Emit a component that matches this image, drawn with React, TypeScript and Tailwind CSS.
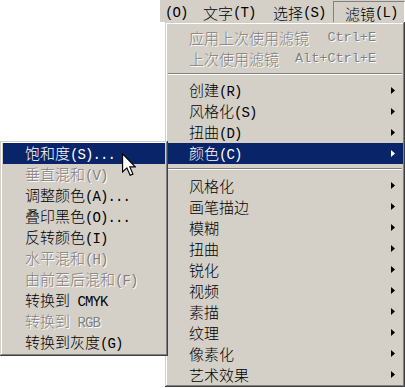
import React from "react";

const bevel =
  "shadow-[inset_-1px_-1px_0_#404040,inset_1px_1px_0_#d4d0c8,inset_-2px_-2px_0_#808080,inset_2px_2px_0_#ffffff]";

function T({ s }: { s: string }) {
  const parts = s.split(/([\x00-\xff]+)/).filter(Boolean);
  return (
    <>
      {parts.map((p, i) =>
        /^[\x00-\xff]+$/.test(p) ? (
          <span
            key={i}
            className="[font-family:'Liberation_Mono',monospace] text-[14px] tracking-[-0.9px] whitespace-pre"
          >
            {p}
          </span>
        ) : (
          <span key={i}>{p}</span>
        )
      )}
    </>
  );
}

function Arrow({ white }: { white?: boolean }) {
  return (
    <svg width="4" height="7" viewBox="0 0 4 7">
      <polygon points="0,0 4,3.5 0,7" fill={white ? "#ffffff" : "#000000"} />
    </svg>
  );
}

type Item = {
  label?: string;
  sep?: boolean;
  disabled?: boolean;
  active?: boolean;
  arrow?: boolean;
  shortcut?: string;
};

function Row({ it, pl }: { it: Item; pl: string }) {
  if (it.sep) {
    return (
      <div className="h-[11px] pt-[4px] px-[1px]">
        <div className="h-[2px] border-t border-b border-t-[#808080] border-b-white" />
      </div>
    );
  }
  const color = it.active
    ? "bg-[#0a246a] text-white"
    : it.disabled
    ? "text-[#808080] [text-shadow:1px_1px_0_#ffffff]"
    : "text-black";
  return (
    <div className={`h-[21px] flex items-center ${pl} pr-[8px] ${color}`}>
      <div className="flex-1 whitespace-nowrap leading-none">
        <T s={it.label || ""} />
      </div>
      {it.shortcut && (
        <span className="mr-[19px] [font-family:'Liberation_Mono',monospace] text-[13.5px] leading-none whitespace-pre">
          {it.shortcut}
        </span>
      )}
      {it.arrow && <Arrow white={it.active} />}
    </div>
  );
}

const mainItems: Item[] = [
  { label: "应用上次使用滤镜", disabled: true, shortcut: "Ctrl+E" },
  { label: "上次使用滤镜", disabled: true, shortcut: "Alt+Ctrl+E" },
  { sep: true },
  { label: "创建(R)", arrow: true },
  { label: "风格化(S)", arrow: true },
  { label: "扭曲(D)", arrow: true },
  { label: "颜色(C)", arrow: true, active: true },
  { sep: true },
  { label: "风格化", arrow: true },
  { label: "画笔描边", arrow: true },
  { label: "模糊", arrow: true },
  { label: "扭曲", arrow: true },
  { label: "锐化", arrow: true },
  { label: "视频", arrow: true },
  { label: "素描", arrow: true },
  { label: "纹理", arrow: true },
  { label: "像素化", arrow: true },
  { label: "艺术效果", arrow: true },
];

const subItems: Item[] = [
  { label: "饱和度(S)...", active: true },
  { label: "垂直混和(V)", disabled: true },
  { label: "调整颜色(A)..." },
  { label: "叠印黑色(O)..." },
  { label: "反转颜色(I)" },
  { label: "水平混和(H)", disabled: true },
  { label: "由前至后混和(F)", disabled: true },
  { label: "转换到 CMYK" },
  { label: "转换到 RGB", disabled: true },
  { label: "转换到灰度(G)" },
];

export default function App() {
  return (
    <div className="relative w-[405px] h-[388px] bg-white overflow-hidden [font-family:'Noto_Sans_CJK_SC',sans-serif] text-[15px] font-light">
      {/* menu bar */}
      <div className="ml-[160px] h-[22px] bg-[#d4d0c8] flex text-black">
        <div className="w-[33px] pl-[5px] flex items-center pt-[3px] leading-none whitespace-nowrap">
          <T s="(O)" />
        </div>
        <div className="w-[66px] pl-[10px] flex items-center pt-[3px] leading-none whitespace-nowrap">
          <T s="文字(T)" />
        </div>
        <div className="w-[74px] pl-[14px] flex items-center pt-[3px] leading-none whitespace-nowrap">
          <T s="选择(S)" />
        </div>
        <div className="w-[72px] mt-[1px] pl-[11px] flex items-center pt-[2px] leading-none whitespace-nowrap border-t border-l border-r border-t-[#808080] border-l-[#808080] border-r-white">
          <T s="滤镜(L)" />
        </div>
      </div>

      {/* main menu */}
      <div
        className={`absolute left-[165px] top-[22px] w-[240px] h-[365px] bg-[#d4d0c8] ${bevel} px-[2px] pt-[5px]`}
      >
        {mainItems.map((it, i) => (
          <Row key={i} it={it} pl="pl-[22px]" />
        ))}
      </div>

      {/* submenu */}
      <div
        className={`absolute left-0 top-[141px] w-[168px] h-[215px] bg-[#d4d0c8] ${bevel} pl-[3px] pr-[3px] pt-[2px]`}
      >
        {subItems.map((it, i) => (
          <Row key={i} it={it} pl="pl-[22px]" />
        ))}
      </div>

      {/* cursor */}
      <svg
        className="absolute left-[122px] top-[153px]"
        width="14"
        height="24"
        viewBox="0 0 12 20"
      >
        <polygon
          points="0.5,0.5 0.5,16 4.2,12.5 7,18.8 9.4,17.8 6.7,11.6 11.3,11.6"
          fill="#ffffff"
          stroke="#000000"
          strokeWidth="1"
          strokeLinejoin="miter"
        />
      </svg>
    </div>
  );
}
